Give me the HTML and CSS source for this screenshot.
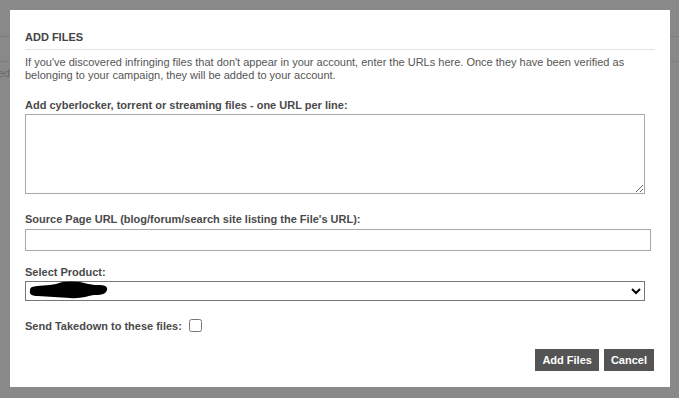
FILE: index.html
```html
<!DOCTYPE html>
<html lang="en">
<head>
  <meta charset="UTF-8" />
  <title>Add Files</title>
  <link rel="stylesheet" href="styles.css">
</head>
<body>

  <div class="page">
    <div class="page-top"></div>
    <div class="page-row"></div>
    <div class="page-text"><span>Last updated</span></div>
  </div>

  <div class="modal">
    <h2>ADD FILES</h2>
    <p class="intro">If you've discovered infringing files that don't appear in your account, enter the URLs here. Once they have been verified as belonging to your campaign, they will be added to your account.</p>

    <label class="field-label" for="files">Add cyberlocker, torrent or streaming files - one URL per line:</label>
    <textarea id="files" class="files"></textarea>

    <label class="field-label gap" for="source">Source Page URL (blog/forum/search site listing the File's URL):</label>
    <input type="text" id="source" class="source">

    <label class="field-label gap-sm" for="product">Select Product:</label>
    <div class="select-wrap">
      <select id="product" class="product">
        <option value=""></option>
      </select>
      <svg class="redact" width="82" height="19" viewBox="0 0 82 19">
        <path d="M4 6 C10 4 20 5 28 3 C34 0 44 0 52 1 C58 2 62 4 70 4 C76 4 80 5 79 9 C78 12 76 14 66 14 C60 15 52 18 42 17 C32 16 20 16 10 15 C4 15 1 13 2 10 C2 8 2 7 4 6 Z" fill="#000"/>
      </svg>
    </div>

    <div class="takedown">
      <label for="takedown">Send Takedown to these files:</label>
      <input type="checkbox" id="takedown">
    </div>

    <div class="actions">
      <button class="btn">Add Files</button>
      <button class="btn">Cancel</button>
    </div>
  </div>

</body>
</html>
```

FILE: styles.css
```css
* { margin: 0; padding: 0; box-sizing: border-box; }
body {
  background: #898989;
  font-family: 'Liberation Sans', Arial, sans-serif;
  font-size: 11px;
  color: #555;
  height: 398px;
  overflow: hidden;
}

/* page behind the overlay */
.page-top {
  height: 37px;
  border-bottom: 1px solid #7d7d7d;
}
.page-row {
  height: 25px;
  border-bottom: 1px solid #7d7d7d;
}
.page-text {
  width: 10px;
  display: flex;
  justify-content: flex-end;
  margin-top: 5px;
  white-space: nowrap;
  color: #6a6a6a;
  font-size: 11px;
}

/* Modal */
.modal {
  position: absolute;
  top: 10px;
  left: 10px;
  width: 660px;
  height: 377px;
  background: #fff;
  padding: 21px 15px 0 15px;
}
.modal h2 {
  font-size: 11px;
  line-height: 13px;
  font-weight: bold;
  color: #444;
  padding-bottom: 5px;
  border-bottom: 1px solid #e3e3e3;
}
.intro {
  margin-top: 6px;
  line-height: 13px;
  color: #555;
}
.field-label {
  display: block;
  margin-top: 17px;
  line-height: 13px;
  font-weight: bold;
  color: #4a4a4a;
}
.field-label.gap { margin-top: 19px; }
.field-label.gap-sm { margin-top: 15px; }

textarea.files {
  display: block;
  margin-top: 2px;
  width: 620px;
  height: 80px;
  border: 1px solid #a9a9a9;
  resize: vertical;
}
input.source {
  display: block;
  margin-top: 3px;
  width: 626px;
  height: 22px;
  border: 1px solid #a9a9a9;
}
.select-wrap {
  position: relative;
  margin-top: 2px;
  width: 620px;
}
select.product {
  display: block;
  width: 620px;
  height: 20px;
  border: 1px solid #767676;
  border-radius: 0;
  background: #fff;
  font-size: 11px;
}
.redact {
  position: absolute;
  top: 0;
  left: 3px;
}

.takedown {
  display: flex;
  align-items: center;
  gap: 7px;
  margin-top: 19px;
  font-weight: bold;
  color: #4a4a4a;
  line-height: 13px;
}
.takedown input {
  width: 13px;
  height: 13px;
  margin: 0;
  position: relative;
  top: -1px;
}

.actions {
  display: flex;
  justify-content: flex-end;
  gap: 5px;
  margin-top: 16px;
  padding-right: 1px;
}
.btn {
  height: 22px;
  padding: 0 7px;
  background: #545454;
  color: #fff;
  border: none;
  font-family: 'Liberation Sans', Arial, sans-serif;
  font-size: 11px;
  font-weight: bold;
}
```
